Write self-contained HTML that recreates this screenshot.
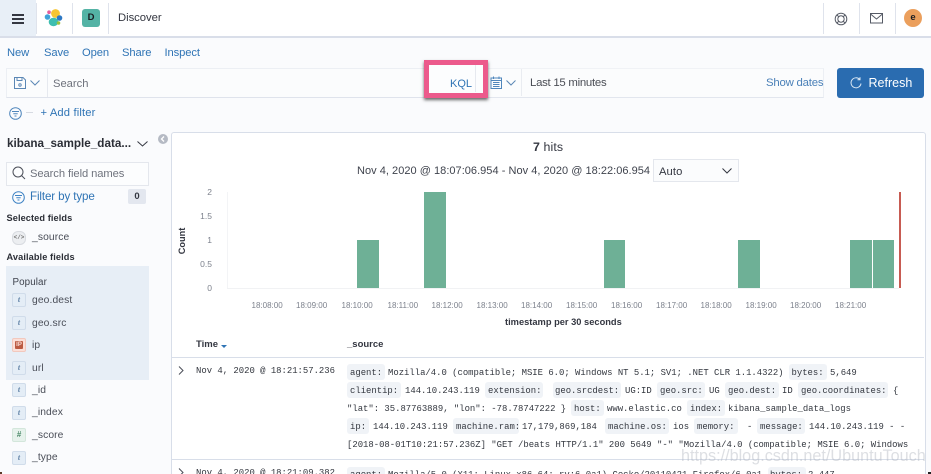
<!DOCTYPE html>
<html style="width:931px;height:474px;overflow:hidden"><head><meta charset="utf-8"><style>
html,body{margin:0;padding:0}
body{width:931px;height:474px;overflow:hidden;position:relative;background:#fafbfd;font-family:"Liberation Sans",sans-serif;color:#343741}
#r{position:absolute;left:0;top:0;width:931px;height:474px;overflow:hidden}
.a{position:absolute}
.t{position:absolute;white-space:nowrap;line-height:16px}
.l{color:#2f74b5;font-size:11.2px;letter-spacing:-.1px}
.b{font-weight:700}
.v{width:1px;height:31px;top:3px;background:#dfe3ec;position:absolute}
.tk{position:absolute;left:12px;width:12px;height:12px;background:#e4edf6;border:1px solid #d0dcea;border-radius:2px;font:italic 700 8px/12px "Liberation Serif",serif;color:#5c7ea3;text-align:center}
.f{position:absolute;left:32px;font-size:10.3px;line-height:14px;color:#4a4e58;letter-spacing:.1px;white-space:nowrap}
.y{position:absolute;width:20px;text-align:right;font-size:8.5px;line-height:10px;color:#7c818c;left:192px}
.x{position:absolute;top:301px;font-size:8px;line-height:10px;color:#7c818c;white-space:nowrap}
.bar{position:absolute;background:#6eb096;width:21.5px}
.m{position:absolute;white-space:pre;font:8.92px/14px "Liberation Mono",monospace;color:#33373f}
.c{position:absolute;height:16px;background:#f0f3f7;border-radius:3px}
</style></head><body><div id="r">

<!-- top bar -->
<div class="a" style="left:0;top:0;width:931px;height:36px;background:#fff;border-bottom:2px solid #d9dee9"></div>
<div class="a" style="left:0;top:0;width:36px;height:36px;background:#e8eff7"></div>
<div class="a" style="left:12px;top:13.5px;width:12px;height:2px;background:#343741"></div>
<div class="a" style="left:12px;top:17.5px;width:12px;height:2px;background:#343741"></div>
<div class="a" style="left:12px;top:21.5px;width:12px;height:2px;background:#343741"></div>
<div class="v" style="left:36px"></div><div class="v" style="left:72px"></div><div class="v" style="left:108px"></div>
<svg class="a" style="left:44px;top:8px" width="20" height="20" viewBox="0 0 20 20">
<circle cx="11.5" cy="5.5" r="4.4" fill="#f7c531"/><circle cx="5" cy="4.2" r="1.8" fill="#e35d9c"/><circle cx="3.5" cy="9" r="2.8" fill="#3ea2d8"/><circle cx="15.5" cy="10" r="2.8" fill="#2d78c4"/><ellipse cx="9.5" cy="14" rx="4.8" ry="4.2" fill="#3ebeb0"/><circle cx="14.5" cy="15" r="1.8" fill="#98c23f"/></svg>
<div class="a" style="left:82px;top:9px;width:18px;height:18px;border-radius:3px;background:#54b3a5;color:#1a1c21;font:700 9.5px/18px 'Liberation Sans',sans-serif;text-align:center">D</div>
<div class="t" style="left:118px;top:10px;font-size:11.3px;color:#343741;letter-spacing:-.05px">Discover</div>
<div class="v" style="left:823px"></div><div class="v" style="left:859px"></div><div class="v" style="left:895px"></div>
<svg class="a" style="left:834px;top:12px" width="14" height="14" viewBox="0 0 14 14" fill="none" stroke="#555a65" stroke-width="1"><circle cx="7" cy="7" r="5.8"/><circle cx="7" cy="7" r="3.2"/><path d="M3 3l2 2M11 3L9 5M3 11l2-2M11 11L9 9"/></svg>
<svg class="a" style="left:870px;top:13px" width="14" height="11" viewBox="0 0 14 11" fill="none" stroke="#555a65" stroke-width="1"><rect x=".5" y=".5" width="12" height="9.5"/><path d="M.5 1l6 5 6-5"/></svg>
<div class="a" style="left:904px;top:9px;width:18px;height:18px;border-radius:9px;background:#eb9f5c;color:#1a1c21;font:700 9.5px/17px 'Liberation Sans',sans-serif;text-align:center">e</div>

<!-- menu -->
<div class="t l" style="left:7px;top:45px">New</div>
<div class="t l" style="left:44px;top:45px">Save</div>
<div class="t l" style="left:82px;top:45px">Open</div>
<div class="t l" style="left:122px;top:45px">Share</div>
<div class="t l" style="left:164.5px;top:45px">Inspect</div>

<!-- search row -->
<div class="a" style="left:6px;top:68px;width:418px;height:28px;background:#fbfcfd;border:1px solid #eceff4;border-bottom:1.5px solid #dfe3ec"></div>
<div class="a" style="left:47px;top:69px;width:1px;height:28px;background:#e6e9ef"></div>
<svg class="a" style="left:14px;top:77px" width="12" height="12" viewBox="0 0 12 12" fill="none" stroke="#5b87b5" stroke-width="1"><path d="M.5.5h8.500l2.500 2.500v8.500H.5z"/><path d="M3 .5v3h5v-3"/><circle cx="6" cy="8" r="1.200"/></svg>
<svg class="a" style="left:30px;top:80px" width="10" height="6" viewBox="0 0 10 6" fill="none" stroke="#5b87b5" stroke-width="1"><path d="M.5.5L5 5 9.500.5"/></svg>
<div class="t" style="left:53px;top:76px;font-size:11.2px;color:#6d717b">Search</div>
<div class="a" style="left:488px;top:68px;width:335px;height:28px;background:#fbfcfd;border-top:1px solid #f0f2f6;border-right:1px solid #eceff4;border-bottom:1.5px solid #e2e6ee"></div>
<div class="a" style="left:424px;top:60px;width:54px;height:28px;border:5px solid #ec5a8c;box-shadow:0 2px 3px rgba(40,40,40,.7);background:#fcfdfe"></div>
<div class="t" style="left:450px;top:76px;font-size:11px;color:#2f74b5">KQL</div>
<div class="a" style="left:475px;top:65px;width:1px;height:27px;background:#e6e9ef"></div>
<svg class="a" style="left:490px;top:76px" width="13" height="13" viewBox="0 0 13 13" fill="none" stroke="#4f86bc" stroke-width="1"><rect x="1" y="2" width="10.500" height="10.500"/><path d="M1 4.500h10.500M3.500.5v2.500M9 .5v2.500M3 6.500h6.500M3 8.500h6.500M3 10.500h6.500"/></svg>
<svg class="a" style="left:506px;top:80px" width="10" height="6" viewBox="0 0 10 6" fill="none" stroke="#5b87b5" stroke-width="1"><path d="M.5.5L5 5 9.500.5"/></svg>
<div class="a" style="left:521px;top:69px;width:1px;height:27px;background:#e9ecf1"></div>
<div class="t" style="left:530px;top:75px;font-size:11.4px;color:#4a4d55;letter-spacing:-.27px">Last 15 minutes</div>
<div class="t" style="left:766px;top:75px;font-size:11.4px;color:#4a80b8;letter-spacing:-.22px">Show dates</div>
<div class="a" style="left:837px;top:68px;width:87px;height:30px;background:#2a6cb0;border-radius:3px"></div>
<svg class="a" style="left:850px;top:77px" width="12" height="13" viewBox="0 0 12 13" fill="none" stroke="#dbe8f4" stroke-width="1"><path d="M9.800 2.500A5 5 0 1 0 11 6.500"/><path d="M7.500 2.700h2.500V.3"/></svg>
<div class="t" style="left:868.500px;top:75px;font-size:12.500px;color:#fff">Refresh</div>

<!-- filter row -->
<svg class="a" style="left:9px;top:107px" width="13" height="13" viewBox="0 0 13 13" fill="none" stroke="#4f86bc" stroke-width="1"><circle cx="6.500" cy="6.500" r="5.800"/><path d="M3 4.500h7M4.300 6.800h4.400M5.500 9h2"/></svg>
<div class="a" style="left:26px;top:112px;width:7px;height:1px;background:#d6dae2"></div>
<div class="t l" style="left:40.500px;top:104.500px;font-size:11.200px;letter-spacing:.15px">+ Add filter</div>

<!-- sidebar -->
<div class="t b" style="left:7px;top:136px;font-size:11.700px;color:#2b2e36">kibana_sample_data...</div>
<svg class="a" style="left:137px;top:141px" width="11" height="6" viewBox="0 0 11 6" fill="none" stroke="#343741" stroke-width="1"><path d="M.5.5L5.500 5l5-4.500"/></svg>
<div class="a" style="left:158px;top:134px;width:10px;height:10px;border-radius:5px;background:#b5bac4;"></div>
<svg class="a" style="left:160px;top:136px" width="6" height="6" viewBox="0 0 6 6" fill="none" stroke="#fff" stroke-width="1.300"><path d="M4 .5L1.500 3 4 5.500"/></svg>
<div class="a" style="left:6px;top:162px;width:141px;height:22px;background:#fcfdfe;border:1px solid #e4e7ed"></div>
<svg class="a" style="left:12px;top:166px" width="14" height="14" viewBox="0 0 14 14" fill="none" stroke="#4b4f59" stroke-width="1"><circle cx="6" cy="6" r="5"/><path d="M9.500 9.500l3.500 3.500"/></svg>
<div class="t" style="left:30px;top:166px;font-size:11.200px;color:#6f737d;letter-spacing:-.08px">Search field names</div>
<svg class="a" style="left:12px;top:190.500px" width="13" height="13" viewBox="0 0 13 13" fill="none" stroke="#3f83c4" stroke-width="1"><circle cx="6.500" cy="6.500" r="5.800"/><path d="M3 4.500h7M4.300 6.800h4.400M5.500 9h2"/></svg>
<div class="t" style="left:30px;top:189px;font-size:11.600px;color:#2f74b5;letter-spacing:-.12px">Filter by type</div>
<div class="a" style="left:128px;top:189px;width:18px;height:15px;background:#e3e7ef;border-radius:2px;font:700 9.500px/15px 'Liberation Sans',sans-serif;text-align:center;color:#343741">0</div>
<div class="t b" style="left:6.500px;top:210px;font-size:9.200px;color:#2b2e36;letter-spacing:.1px">Selected fields</div>
<div class="a" style="left:12px;top:231px;width:12px;height:12px;border-radius:6px;background:#eceef1;border:1px solid #d8dbe0;font:700 6px/12px 'Liberation Mono',monospace;text-align:center;color:#777">&lt;/&gt;</div>
<div class="f" style="top:231px">_source</div>
<div class="t b" style="left:6.500px;top:249px;font-size:9.200px;color:#2b2e36;letter-spacing:.1px">Available fields</div>
<div class="a" style="left:6px;top:266px;width:143px;height:114px;background:#e7eef6"></div>
<div class="t" style="left:12.500px;top:275px;font-size:9.800px;color:#3f434d;letter-spacing:.1px">Popular</div>

<div class="tk" style="top:293px">t</div><div class="f" style="top:294px">geo.dest</div>
<div class="tk" style="top:316px">t</div><div class="f" style="top:317px">geo.src</div>
<div class="tk" style="top:338px;background:#fbdfd8;border-color:#f2c8bd;"></div>
<div class="a" style="left:15px;top:341px;width:8px;height:8px;background:#bb5a42;color:#fbdfd8;font:700 6px/8px 'Liberation Sans',sans-serif;text-align:center;border-radius:1px">IP</div>
<div class="f" style="top:339px">ip</div>
<div class="tk" style="top:361px">t</div><div class="f" style="top:362px">url</div>
<div class="tk" style="top:383px">t</div><div class="f" style="top:384px">_id</div>
<div class="tk" style="top:406px">t</div><div class="f" style="top:406px">_index</div>
<div class="tk" style="top:428px;background:#e6f2ec;border-color:#d3e6db;color:#4d8a6a;font-family:'Liberation Sans',sans-serif">#</div><div class="f" style="top:429px">_score</div>
<div class="tk" style="top:451px">t</div><div class="f" style="top:451px">_type</div>

<!-- card -->
<div class="a" style="left:171px;top:132px;width:753px;height:360px;background:#fff;border:1px solid #d8dee9;border-radius:3px"></div>
<div class="t" style="left:533px;top:138.500px;font-size:12.400px;color:#343741;letter-spacing:.1px"><b>7</b> hits</div>
<div class="t" style="left:357px;top:163px;font-size:11px;color:#3f434d;letter-spacing:.03px">Nov 4, 2020 @ 18:07:06.954 - Nov 4, 2020 @ 18:22:06.954</div>
<div class="a" style="left:653px;top:159px;width:84px;height:21px;background:#fbfcfd;border:1px solid #e4e7ed"></div>
<div class="t" style="left:659px;top:163.500px;font-size:11.200px;color:#343741;letter-spacing:.1px">Auto</div>
<svg class="a" style="left:722px;top:168px" width="10" height="6" viewBox="0 0 10 6" fill="none" stroke="#343741" stroke-width="1"><path d="M.5.5L5 5 9.500.5"/></svg>

<!-- chart -->
<div class="a" style="left:227px;top:192px;width:1px;height:96px;background:#f3f4f6"></div>
<div class="a" style="left:227px;top:288px;width:672px;height:1px;background:#f1f2f4"></div>
<div class="y" style="top:187px">2</div><div class="y" style="top:211px">1.5</div><div class="y" style="top:235px">1</div><div class="y" style="top:259px">0.5</div><div class="y" style="top:283px">0</div>
<div class="t b" style="left:163px;top:233px;font-size:9.200px;color:#343741;transform:rotate(-90deg);width:38px;text-align:center">Count</div>
<div class="bar" style="left:357px;top:240px;height:48px"></div>
<div class="bar" style="left:424px;top:192px;height:96px"></div>
<div class="bar" style="left:603.500px;top:240px;height:48px"></div>
<div class="bar" style="left:738px;top:240px;height:48px"></div>
<div class="bar" style="left:850px;top:240px;height:48px"></div>
<div class="bar" style="left:872.500px;top:240px;height:48px"></div>
<div class="a" style="left:899px;top:192px;width:1.500px;height:96px;background:#c75b52"></div>
<div class="x" style="left:251.500px">18:08:00</div><div class="x" style="left:296px">18:09:00</div><div class="x" style="left:341.500px">18:10:00</div><div class="x" style="left:387.500px">18:11:00</div><div class="x" style="left:431.500px">18:12:00</div><div class="x" style="left:476.500px">18:13:00</div><div class="x" style="left:521px">18:14:00</div><div class="x" style="left:566px">18:15:00</div><div class="x" style="left:611px">18:16:00</div><div class="x" style="left:656px">18:17:00</div><div class="x" style="left:700.500px">18:18:00</div><div class="x" style="left:745.500px">18:19:00</div><div class="x" style="left:790px">18:20:00</div><div class="x" style="left:835px">18:21:00</div>
<div class="t b" style="left:505px;top:314px;font-size:9.300px;color:#343741">timestamp per 30 seconds</div>

<!-- table -->
<div class="t b" style="left:196px;top:337px;font-size:9.500px;color:#343741">Time</div>
<div class="a" style="left:221px;top:345px;width:0;height:0;border-left:3px solid transparent;border-right:3px solid transparent;border-top:3px solid #2f74b5"></div>
<div class="t b" style="left:347px;top:337px;font-size:9.500px;color:#343741">_source</div>
<div class="a" style="left:172px;top:357px;width:752px;height:1px;background:#d8dee9"></div>
<div class="a" style="left:172px;top:459px;width:752px;height:1px;background:#d8dee9"></div>
<svg class="a" style="left:178px;top:366px" width="6" height="9" viewBox="0 0 6 9" fill="none" stroke="#4a4e58" stroke-width="1"><path d="M1 .5L5 4.500 1 8.500"/></svg>
<svg class="a" style="left:178px;top:468px" width="6" height="9" viewBox="0 0 6 9" fill="none" stroke="#4a4e58" stroke-width="1"><path d="M1 .5L5 4.500 1 8.500"/></svg>

<div class="m" style="left:196px;top:364px">Nov 4, 2020 @ 18:21:57.236</div>
<div class="m" style="left:196px;top:466px">Nov 4, 2020 @ 18:21:09.382</div>

<!-- chips -->
<div class="c" style="left:347px;top:364px;width:38px"></div>
<div class="c" style="left:789px;top:364px;width:38px"></div>
<div class="c" style="left:347px;top:382px;width:54px"></div>
<div class="c" style="left:485px;top:382px;width:58px"></div>
<div class="c" style="left:553px;top:382px;width:68px"></div>
<div class="c" style="left:657px;top:382px;width:48px"></div>
<div class="c" style="left:725px;top:382px;width:54px"></div>
<div class="c" style="left:798px;top:382px;width:90px"></div>
<div class="c" style="left:571px;top:400px;width:33px"></div>
<div class="c" style="left:687px;top:400px;width:38px"></div>
<div class="c" style="left:347px;top:418px;width:22px"></div>
<div class="c" style="left:453px;top:418px;width:66px"></div>
<div class="c" style="left:605px;top:418px;width:64px"></div>
<div class="c" style="left:694px;top:418px;width:44px"></div>
<div class="c" style="left:757px;top:418px;width:48px"></div>
<div class="c" style="left:347px;top:467px;width:38px"></div>
<div class="c" style="left:768px;top:467px;width:38px"></div>

<!-- line 1 -->
<div class="m" style="left:350px;top:366px">agent:</div>
<div class="m" style="left:388px;top:366px">Mozilla/4.0 (compatible; MSIE 6.0; Windows NT 5.1; SV1; .NET CLR 1.1.4322)</div>
<div class="m" style="left:791.500px;top:366px">bytes:</div>
<div class="m" style="left:830px;top:366px">5,649</div>
<!-- line 2 -->
<div class="m" style="left:350px;top:384px">clientip:</div>
<div class="m" style="left:405px;top:384px">144.10.243.119</div>
<div class="m" style="left:488px;top:384px">extension:</div>
<div class="m" style="left:555px;top:384px">geo.srcdest:</div>
<div class="m" style="left:625px;top:384px">UG:ID</div>
<div class="m" style="left:660px;top:384px">geo.src:</div>
<div class="m" style="left:709px;top:384px">UG</div>
<div class="m" style="left:728px;top:384px">geo.dest:</div>
<div class="m" style="left:782px;top:384px">ID</div>
<div class="m" style="left:801px;top:384px">geo.coordinates:</div>
<div class="m" style="left:893px;top:384px">{</div>
<!-- line 3 -->
<div class="m" style="left:347px;top:402px">"lat": 35.87763889, "lon": -78.78747222 }</div>
<div class="m" style="left:574px;top:402px">host:</div>
<div class="m" style="left:607px;top:402px">www.elastic.co</div>
<div class="m" style="left:690px;top:402px">index:</div>
<div class="m" style="left:728px;top:402px">kibana_sample_data_logs</div>
<!-- line 4 -->
<div class="m" style="left:350px;top:420px">ip:</div>
<div class="m" style="left:373px;top:420px">144.10.243.119</div>
<div class="m" style="left:456px;top:420px">machine.ram:</div>
<div class="m" style="left:522px;top:420px">17,179,869,184</div>
<div class="m" style="left:608px;top:420px">machine.os:</div>
<div class="m" style="left:673px;top:420px">ios</div>
<div class="m" style="left:697px;top:420px">memory:</div>
<div class="m" style="left:747px;top:420px">-</div>
<div class="m" style="left:760px;top:420px">message:</div>
<div class="m" style="left:809px;top:420px">144.10.243.119 - -</div>
<!-- line 5 -->
<div class="m" style="left:347px;top:438px">[2018-08-01T10:21:57.236Z] "GET /beats HTTP/1.1" 200 5649 "-" "Mozilla/4.0 (compatible; MSIE 6.0; Windows</div>
<!-- row 2 -->
<div class="m" style="left:350px;top:468px">agent:</div>
<div class="m" style="left:388px;top:468px">Mozilla/5.0 (X11; Linux x86_64; rv:6.0a1) Gecko/20110421 Firefox/6.0a1</div>
<div class="m" style="left:770px;top:468px">bytes:</div>
<div class="m" style="left:808px;top:468px">2,447</div>

<!-- watermark -->
<div class="t" style="left:681px;top:446px;font-size:16.200px;line-height:20px;color:rgba(170,175,185,.4)">https://blog.csdn.net/UbuntuTouch</div>
<div class="a" style="left:0;top:472px;width:2px;height:2px;background:#5a3a28"></div>
<div class="a" style="left:928px;top:472px;width:3px;height:2px;background:#222"></div>
</div></body></html>
